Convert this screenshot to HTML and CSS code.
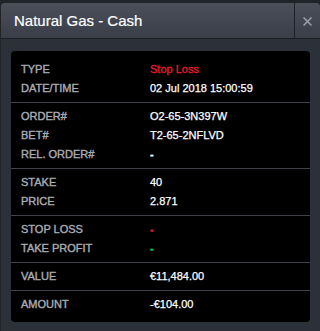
FILE: index.html
```html
<!DOCTYPE html>
<html>
<head>
<meta charset="utf-8">
<link rel="stylesheet" href="styles.css">
</head>
<body>
<div class="dialog">
  <div class="header">
    <div class="title">Natural Gas - Cash</div>
    <div class="close">
      <svg width="9" height="9" viewBox="0 0 9 9"><path d="M0.5 0.5 L8.5 8.5 M8.5 0.5 L0.5 8.5" stroke="#9ca1a9" stroke-width="1.5" fill="none"/></svg>
    </div>
  </div>
  <div class="body">
    <div class="panel">
      <div class="group">
        <div class="row"><span class="label">TYPE</span><span class="value red">Stop Loss</span></div>
        <div class="row"><span class="label">DATE/TIME</span><span class="value">02 Jul 2018 15:00:59</span></div>
      </div>
      <div class="group">
        <div class="row"><span class="label">ORDER#</span><span class="value">O2-65-3N397W</span></div>
        <div class="row"><span class="label">BET#</span><span class="value">T2-65-2NFLVD</span></div>
        <div class="row"><span class="label">REL. ORDER#</span><span class="value dash">-</span></div>
      </div>
      <div class="group">
        <div class="row"><span class="label">STAKE</span><span class="value">40</span></div>
        <div class="row"><span class="label">PRICE</span><span class="value">2.871</span></div>
      </div>
      <div class="group">
        <div class="row"><span class="label">STOP LOSS</span><span class="value red dash">-</span></div>
        <div class="row"><span class="label">TAKE PROFIT</span><span class="value green dash">-</span></div>
      </div>
      <div class="group">
        <div class="row"><span class="label">VALUE</span><span class="value">€11,484.00</span></div>
      </div>
      <div class="group">
        <div class="row"><span class="label">AMOUNT</span><span class="value">-€104.00</span></div>
      </div>
    </div>
  </div>
</div>
</body>
</html>
```
FILE: styles.css
```css
html, body {
  margin: 0;
  padding: 0;
  height: 100%;
  overflow: hidden;
}
body {
  background: #202328;
  font-family: "Liberation Sans", Arial, sans-serif;
}
.dialog {
  margin: 3px 0 0 1px;
  border-radius: 4px 4px 0 0;
  background: #2c3139;
  overflow: hidden;
}
.header {
  display: flex;
  height: 35px;
  border-bottom: 1px solid #1c2026;
  background: linear-gradient(#4a4f59, #393e48);
}
.title {
  flex: 1;
  padding-left: 13px;
  font-size: 15px;
  line-height: 35px;
  color: #ffffff;
  -webkit-text-stroke: 0.2px #ffffff;
}
.close {
  width: 26px;
  border-left: 1px solid #1e2228;
  display: flex;
  align-items: center;
  justify-content: center;
  padding-top: 1px;
  box-sizing: border-box;
}
.body {
  padding: 12px 10px;
}
.panel {
  background: #000000;
  border-radius: 4px;
  padding: 5px 0 4px;
}
.group {
  padding: 4px 10px;
}
.group + .group {
  border-top: 1px solid #3e424b;
}
.row {
  display: grid;
  grid-template-columns: 129px 1fr;
  font-size: 11px;
  line-height: 19px;
}
.label {
  color: #a8acb3;
  -webkit-text-stroke: 0.4px #a8acb3;
}
.value {
  color: #ffffff;
  -webkit-text-stroke: 0.25px #ffffff;
}
.value.dash {
  font-weight: bold;
}
.value.red {
  color: #ee1c25;
  -webkit-text-stroke: 0.3px #ee1c25;
}
.value.green {
  color: #1fc03a;
  -webkit-text-stroke: 0.4px #1fc03a;
}
```
